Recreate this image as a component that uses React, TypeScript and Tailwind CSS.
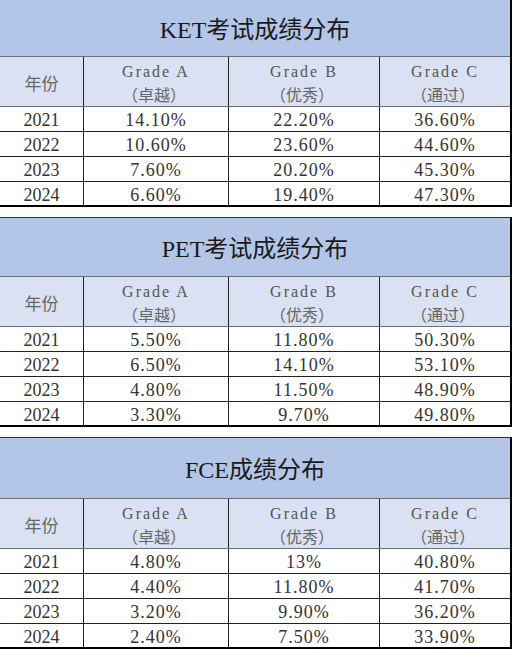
import React from "react";

type Row = [string, string, string, string];

const tables: { title: string; titleH: string; top: boolean; rows: Row[] }[] = [
  {
    title: "KET考试成绩分布",
    titleH: "h-[57px]",
    top: false,
    rows: [
      ["2021", "14.10%", "22.20%", "36.60%"],
      ["2022", "10.60%", "23.60%", "44.60%"],
      ["2023", "7.60%", "20.20%", "45.30%"],
      ["2024", "6.60%", "19.40%", "47.30%"],
    ],
  },
  {
    title: "PET考试成绩分布",
    titleH: "h-[59px]",
    top: true,
    rows: [
      ["2021", "5.50%", "11.80%", "50.30%"],
      ["2022", "6.50%", "14.10%", "53.10%"],
      ["2023", "4.80%", "11.50%", "48.90%"],
      ["2024", "3.30%", "9.70%", "49.80%"],
    ],
  },
  {
    title: "FCE成绩分布",
    titleH: "h-[61px]",
    top: true,
    rows: [
      ["2021", "4.80%", "13%", "40.80%"],
      ["2022", "4.40%", "11.80%", "41.70%"],
      ["2023", "3.20%", "9.90%", "36.20%"],
      ["2024", "2.40%", "7.50%", "33.90%"],
    ],
  },
];

const serif = "font-['Liberation_Serif','Noto_Sans_CJK_SC',serif]";
const cols = "grid grid-cols-[83px_145px_151px_131px]";

function Table({ t }: { t: (typeof tables)[number] }) {
  const grades: [string, string][] = [
    ["Grade A", "（卓越）"],
    ["Grade B", "（优秀）"],
    ["Grade C", "（通过）"],
  ];
  return (
    <div
      className={`w-[512px] border-r-2 border-black ${t.top ? "border-t border-t-[#333]" : ""} ${serif}`}
    >
      <div
        className={`${t.titleH} bg-[#b4c6e7] border-b border-[#6b6f7a] flex items-center justify-center pt-[4px] text-[24px] text-[#1a1a1a]`}
      >
        {t.title}
      </div>
      <div className={`${cols} h-[50px] bg-[#d9e1f2] border-b border-[#6b6f7a] text-[#555]`}>
        <div className="flex items-center justify-center pt-[2px] text-[17px] font-['Noto_Sans_CJK_SC',sans-serif] text-[#666]">
          年份
        </div>
        {grades.map(([g, c]) => (
          <div
            key={g}
            className="border-l border-[#222] flex flex-col items-center justify-center pt-[3px] leading-[23px]"
          >
            <span className="text-[16px] tracking-[2px]">{g}</span>
            <span className="text-[16px] font-['Noto_Sans_CJK_SC',sans-serif] text-[#666] -ml-[4px]">{c}</span>
          </div>
        ))}
      </div>
      {t.rows.map((r, i) => (
        <div
          key={r[0]}
          className={`${cols} h-[25px] ${i === t.rows.length - 1 ? "border-b-2 border-black" : "border-b border-[#222]"} text-[18px] text-[#333]`}
        >
          {r.map((v, j) => (
            <div
              key={j}
              className={`flex items-center justify-center pt-[2px] leading-none ${j > 0 ? "border-l border-[#222] tracking-[1px]" : ""}`}
            >
              {v}
            </div>
          ))}
        </div>
      ))}
    </div>
  );
}

export default function App() {
  return (
    <div className="w-[514px] h-[650px] bg-white overflow-hidden flex flex-col gap-[10px]">
      {tables.map((t) => (
        <Table key={t.title} t={t} />
      ))}
    </div>
  );
}
